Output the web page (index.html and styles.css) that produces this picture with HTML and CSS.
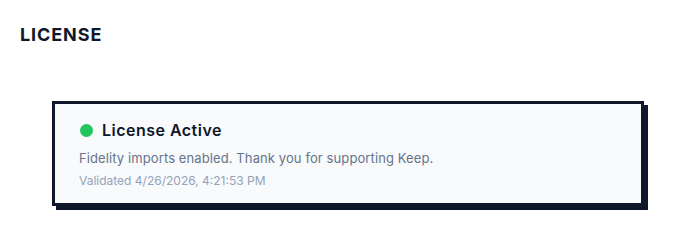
FILE: index.html
```html
<!DOCTYPE html>
<html lang="en">
<head>
    <meta charset="UTF-8">
    <meta name="viewport" content="width=device-width, initial-scale=1.0">
    <title>License</title>
    <link rel="stylesheet" href="styles.css">
</head>
<body>
    <section class="license-section">
        <h2 class="section-title">LICENSE</h2>
        <div class="license-card">
            <div class="license-status">
                <span class="status-dot"></span>
                <span class="status-label">License Active</span>
            </div>
            <p class="license-note">Fidelity imports enabled. Thank you for supporting Keep.</p>
            <p class="license-meta">Validated 4/26/2026, 4:21:53 PM</p>
        </div>
    </section>
</body>
</html>
```

FILE: styles.css
```css
/* Reset default styles */
* {
    margin: 0;
    padding: 0;
    box-sizing: border-box;
}

body {
    font-family: 'Inter', 'Noto Sans', sans-serif;
    background-color: #ffffff;
    color: #0f172a;
}

.license-section {
    padding: 24px 20px;
}

.section-title {
    font-size: 18px;
    font-weight: 700;
    letter-spacing: 0.05em;
    line-height: 22px;
    color: #0f172a;
    margin-bottom: 55px;
}

/* Card with hard offset shadow */
.license-card {
    margin: 0 24px 0 32px;
    background-color: #f8fafc;
    border: 3px solid #0f172a;
    box-shadow: 4px 4px 0 #0f172a;
    padding: 16px 24px 14px;
}

.license-status {
    display: flex;
    align-items: center;
    gap: 9px;
    margin-bottom: 9px;
}

.status-dot {
    width: 13px;
    height: 13px;
    margin-left: 1px;
    border-radius: 50%;
    background-color: #22c55e;
}

.status-label {
    font-size: 16px;
    font-weight: 600;
    line-height: 20px;
    letter-spacing: 0.03em;
}

.license-note {
    font-size: 13px;
    line-height: 18px;
    letter-spacing: 0.1px;
    color: #64748b;
    margin-bottom: 6px;
}

.license-meta {
    font-size: 12px;
    line-height: 16px;
    color: #94a3b8;
}
```
